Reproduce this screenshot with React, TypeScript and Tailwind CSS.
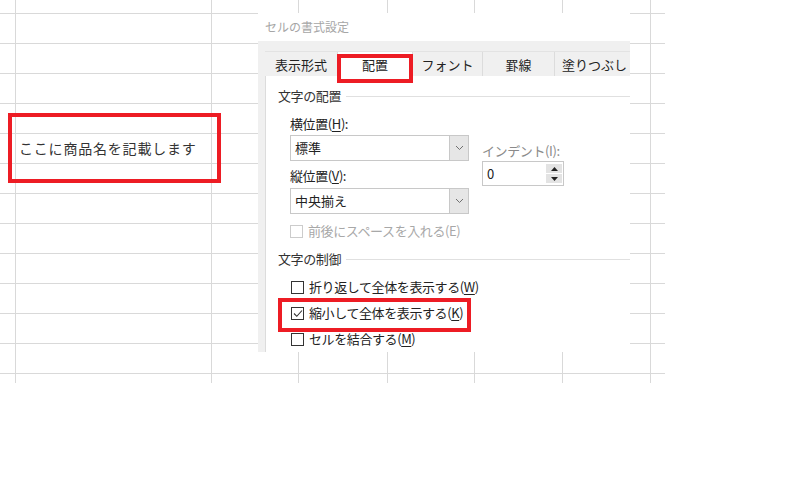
import React from "react";

const COLS = 8;
const ROWS = 14;

const font = "font-['Meiryo_UI','Noto_Sans_CJK_JP',sans-serif]";

function Sheet() {
  const cells = [];
  for (let r = 0; r < ROWS; r++) {
    for (let c = 0; c < COLS; c++) {
      const hasText = r === 5 && c === 1;
      cells.push(
        <div key={`${r}-${c}`} className="flex items-center bg-white pl-[3px] overflow-visible whitespace-nowrap">
          {hasText && (
            <span className="text-[14px] tracking-[0.8px] text-[#333]">ここに商品名を記載します</span>
          )}
        </div>
      );
    }
  }
  return (
    <div className="grid w-[665px] grid-cols-[15px_195px_86px_88px_86px_87px_87px_14px] grid-rows-[13px_repeat(12,29px)_9px] gap-px bg-[#d9d9d9]">
      {cells}
    </div>
  );
}

function Chevron() {
  return (
    <svg width="9" height="6" viewBox="0 0 9 6">
      <polyline points="1,1 4.5,4.5 8,1" fill="none" stroke="#707070" strokeWidth="1" />
    </svg>
  );
}

function Select({ value }: { value: string }) {
  return (
    <div className="flex h-[26px] w-[179px] border border-[#c8c8c8] bg-white">
      <div className="flex flex-1 items-center pl-[4px] text-[13px] text-[#222]">{value}</div>
      <div className="flex w-[19px] items-center justify-center border-l border-[#c8c8c8] bg-[#e6e6e6]">
        <Chevron />
      </div>
    </div>
  );
}

function CheckBox({ checked, disabled }: { checked?: boolean; disabled?: boolean }) {
  return (
    <div
      className={`flex h-[13px] w-[13px] items-center justify-center border bg-white ${
        disabled ? "border-[#cccccc]" : "border-[#333]"
      }`}
    >
      {checked && (
        <svg width="10" height="9" viewBox="0 0 10 9">
          <polyline points="1,4.5 3.8,7.3 9,1.5" fill="none" stroke="#333" strokeWidth="1.1" />
        </svg>
      )}
    </div>
  );
}

function Section({ title }: { title: string }) {
  return (
    <div className="flex h-[20px] items-center">
      <span className="text-[13px] tracking-[-0.4px] text-[#333]">{title}</span>
      <div className="ml-[5px] h-px flex-1 bg-[#e0e0e0]" />
    </div>
  );
}

function CheckRow({ label, u, checked }: { label: string; u: string; checked?: boolean }) {
  return (
    <div className="flex h-[26px] items-center gap-[5px]">
      <CheckBox checked={checked} />
      <span className="text-[13px] tracking-[-0.4px] text-[#222]">
        {label}(<span className="underline underline-offset-2">{u}</span>)
      </span>
    </div>
  );
}

const TABS = [
  { label: "表示形式", w: "w-[73px]" },
  { label: "配置", w: "w-[75px]", active: true },
  { label: "フォント", w: "w-[70px]" },
  { label: "罫線", w: "w-[72px]" },
  { label: "塗りつぶし", w: "w-[80px]" },
];

function Dialog() {
  return (
    <div className="absolute left-[258px] top-[13px] flex h-[339px] w-[372px] flex-col overflow-hidden bg-white">
      <div className="flex h-[32px] items-center pl-[7px] text-[12px] text-[#a6a6a6]">セルの書式設定</div>
      <div className="flex flex-1 flex-col bg-[#f0f0f0] pl-[7px] pt-[10px]">
        {/* Tabs */}
        <div className="flex h-[25px] shrink-0 border-t border-[#e3e3e3]">
          {TABS.map((t) => (
            <div
              key={t.label}
              className={`flex shrink-0 items-center justify-center border-r border-[#dcdcdc] pt-[2px] text-[13px] text-[#222] ${t.w} ${
                t.active ? "bg-white" : "bg-[#f0f0f0]"
              }`}
            >
              {t.label}
            </div>
          ))}
        </div>

        {/* Content */}
        <div className="flex-1 border-l border-[#dcdcdc] bg-white pl-[12px] pt-[10px]">
          <Section title="文字の配置" />
          <div className="flex pl-[12px]">
            <div className="flex w-[179px] flex-col">
              <div className="mt-[10px] h-[16px] text-[13px] leading-[16px] tracking-[-0.4px] text-[#222]">
                横位置(<span className="underline underline-offset-2">H</span>):
              </div>
              <div className="mt-[3px]">
                <Select value="標準" />
              </div>
              <div className="mt-[7px] h-[16px] text-[13px] leading-[16px] tracking-[-0.4px] text-[#222]">
                縦位置(<span className="underline underline-offset-2">V</span>):
              </div>
              <div className="mt-[4px]">
                <Select value="中央揃え" />
              </div>
              <div className="mt-[9px] flex h-[16px] items-center gap-[5px]">
                <CheckBox disabled />
                <span className="text-[13px] tracking-[-0.4px] text-[#a8a8a8]">前後にスペースを入れる(E)</span>
              </div>
            </div>
            <div className="ml-[13px] flex flex-col">
              <div className="mt-[37px] h-[16px] text-[13px] leading-[16px] tracking-[-0.4px] text-[#8a8a8a]">
                インデント(I):
              </div>
              <div className="mt-[2px] flex h-[25px] w-[82px] border border-[#c8c8c8] bg-white">
                <div className="flex flex-1 items-center pl-[4px] text-[13px] text-[#222]">0</div>
                <div className="my-[2px] mr-[1px] flex w-[16px] flex-col gap-px">
                  <div className="flex flex-1 items-center justify-center bg-[#e3e3e3]">
                    <svg width="7" height="4" viewBox="0 0 7 4">
                      <polygon points="0,4 3.5,0 7,4" fill="#222" />
                    </svg>
                  </div>
                  <div className="flex flex-1 items-center justify-center bg-[#e3e3e3]">
                    <svg width="7" height="4" viewBox="0 0 7 4">
                      <polygon points="0,0 3.5,4 7,0" fill="#222" />
                    </svg>
                  </div>
                </div>
              </div>
            </div>
          </div>

          <div className="mt-[10px]">
            <Section title="文字の制御" />
          </div>
          <div className="mt-[5px] flex flex-col pl-[13px]">
            <CheckRow label="折り返して全体を表示する" u="W" />
            <CheckRow label="縮小して全体を表示する" u="K" checked />
            <CheckRow label="セルを結合する" u="M" />
          </div>
        </div>
      </div>
    </div>
  );
}

export default function App() {
  return (
    <div className={`relative h-[480px] w-[800px] overflow-hidden bg-white ${font}`}>
      <Sheet />
      <Dialog />
      {/* highlight boxes */}
      <div className="absolute left-[8px] top-[113px] h-[70px] w-[213px] border-4 border-[#ed1c24]" />
      <div className="absolute left-[337px] top-[54px] h-[29px] w-[76px] border-4 border-[#ed1c24]" />
      <div className="absolute left-[278px] top-[298px] h-[34px] w-[193px] border-4 border-[#ed1c24]" />
    </div>
  );
}
